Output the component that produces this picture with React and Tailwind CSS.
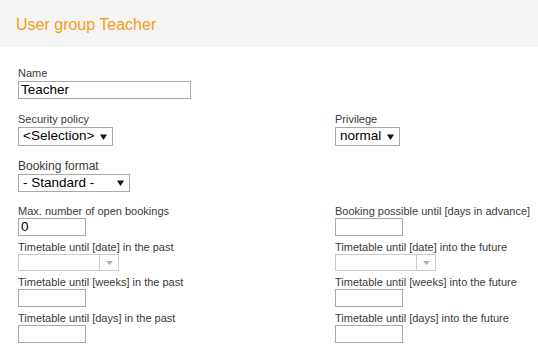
import React from "react";

function Label({ children, big }) {
  return (
    <div
      className={
        big
          ? "text-[12px] leading-[14px] text-[#3a3a3a]"
          : "text-[11px] leading-[13px] text-[#3a3a3a]"
      }
    >
      {children}
    </div>
  );
}

function TextBox({ value = "", w = "w-[68px]", gap = false }) {
  return (
    <div
      className={`${w} h-[18px] ${gap ? "mt-px" : ""} border border-[#a9a9a9] bg-white px-[2px] text-[13.5px] leading-[16px] text-black`}
    >
      {value}
    </div>
  );
}

function Arrow() {
  return (
    <svg width="7" height="6" viewBox="0 0 7 6" className="shrink-0">
      <path d="M0 0.5h7L3.5 6z" fill="#111" />
    </svg>
  );
}

function Select({ value, w, h = "h-[19px]" }) {
  return (
    <div
      className={`${w} ${h} mt-px border border-[#a9a9a9] bg-white flex items-center justify-between pl-[4px] pr-[5px] text-[13.5px] text-black`}
    >
      <span className="whitespace-pre">{value}</span>
      <Arrow />
    </div>
  );
}

function Combo() {
  return (
    <div className="w-[101px] h-[17px] border border-[#c5cbd4] bg-white flex">
      <div className="flex-1" />
      <div className="w-[19px] border-l border-[#c5cbd4] flex items-center justify-center">
        <svg width="7" height="4" viewBox="0 0 7 4">
          <path d="M0 0h7L3.5 4z" fill="#a9b3c2" />
        </svg>
      </div>
    </div>
  );
}

export default function App() {
  return (
    <div className="w-[538px] h-[348px] bg-white font-['Liberation_Sans',Arial,sans-serif] overflow-hidden">
      <div className="h-[47px] bg-[#f4f4f4] flex items-center pl-4">
        <h1 className="text-[16px] text-[#f59d1a] mt-[3px]">User group Teacher</h1>
      </div>

      <div className="pl-[18px] pt-5">
        <div className="mb-[14px]">
          <Label>Name</Label>
          <TextBox value="Teacher" w="w-[173px]" gap />
        </div>

        <div className="grid grid-cols-[317px_1fr] mb-[13px]">
          <div>
            <Label>Security policy</Label>
            <Select value="<Selection>" w="w-[95px]" />
          </div>
          <div>
            <Label>Privilege</Label>
            <Select value="normal" w="w-[65px]" />
          </div>
        </div>

        <div className="mb-[13px]">
          <Label big>Booking format</Label>
          <Select value="- Standard -" w="w-[112px]" h="h-[18px]" />
        </div>

        <div className="grid grid-cols-[317px_1fr] gap-y-[5px]">
          <div>
            <Label>Max. number of open bookings</Label>
            <TextBox value="0" />
          </div>
          <div>
            <Label>Booking possible until [days in advance]</Label>
            <TextBox />
          </div>
          <div>
            <Label>Timetable until [date] in the past</Label>
            <Combo />
          </div>
          <div>
            <Label>Timetable until [date] into the future</Label>
            <Combo />
          </div>
          <div>
            <Label>Timetable until [weeks] in the past</Label>
            <TextBox />
          </div>
          <div>
            <Label>Timetable until [weeks] into the future</Label>
            <TextBox />
          </div>
          <div>
            <Label>Timetable until [days] in the past</Label>
            <TextBox />
          </div>
          <div>
            <Label>Timetable until [days] into the future</Label>
            <TextBox />
          </div>
        </div>
      </div>
    </div>
  );
}
